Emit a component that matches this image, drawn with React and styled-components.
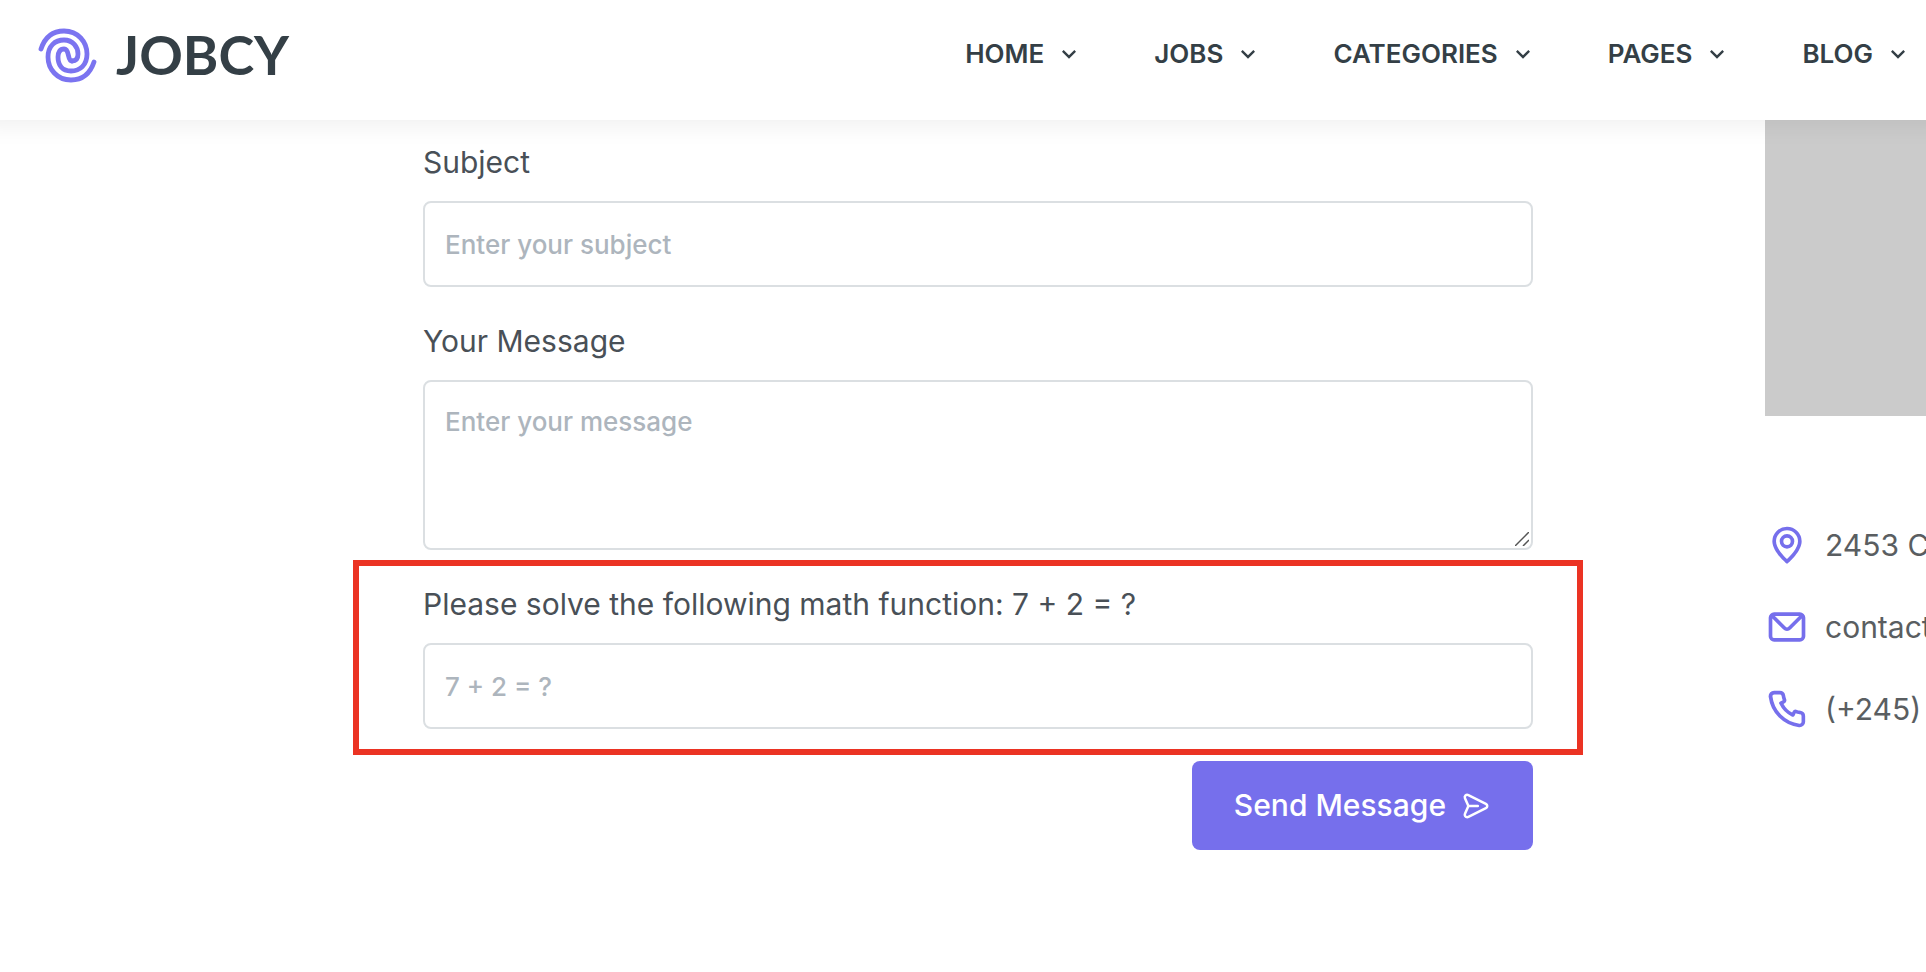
import React from 'react';
import styled, { createGlobalStyle } from 'styled-components';

const GlobalStyle = createGlobalStyle`
  *, *::before, *::after { box-sizing: border-box; }
  body {
    margin: 0;
    background: #fff;
    color: #495057;
    font-family: Inter, "Liberation Sans", sans-serif;
    font-size: 30px;
    line-height: 45px;
    overflow-x: hidden;
  }
`;

const Header = styled.header`
  position: relative;
  z-index: 1;
  display: flex;
  align-items: flex-start;
  justify-content: space-between;
  height: 120px;
  padding: 25px 14px 0 36px;
  background: #fff;
  box-shadow: 0 -20px 24px 24px rgba(0, 0, 0, 0.07);
`;

const Brand = styled.a`
  display: flex;
  align-items: center;
  gap: 18px;
  height: 60px;
  color: #343f46;
  font: 700 54px/60px Lato, sans-serif;
  text-decoration: none;
`;

const NavList = styled.ul`
  display: flex;
  gap: 71px;
  margin: 0;
  padding: 0;
  list-style: none;
`;

const NavLink = styled.a`
  display: flex;
  align-items: center;
  gap: 11px;
  color: #343f46;
  font-size: 26px;
  font-weight: 600;
  line-height: 58px;
  text-decoration: none;
`;

const Main = styled.main`
  display: grid;
  grid-template-columns: 423fr 1110fr 232fr 161fr;
`;

const Form = styled.form`
  grid-column: 2;
  min-width: 0;
  display: flex;
  flex-direction: column;
  gap: 32px;
  padding: 20px 0 40px;
`;

const Field = styled.div`
  position: relative;
  display: flex;
  flex-direction: column;
  gap: 16px;
`;

const HighlightedField = styled(Field)`
  &::after {
    content: "";
    position: absolute;
    inset: -22px -50px -26px -70px;
    border: 6px solid #eb3323;
    pointer-events: none;
  }
`;

const control = `
  display: block;
  width: 100%;
  border: 2px solid #dbdfe2;
  border-radius: 8px;
  background: #fff;
  color: #495057;
  font: 500 26px/40px Inter, "Liberation Sans", sans-serif;
  outline: none;
  &::placeholder { color: #adb5bd; opacity: 1; }
`;

const TextInput = styled.input`
  ${control}
  height: 86px;
  padding: 0 20px;
`;

const TextArea = styled.textarea`
  ${control}
  height: 170px;
  padding: 20px;
  resize: none;
`;

const Grip = styled.svg`
  position: absolute;
  right: 4px;
  bottom: 4px;
  pointer-events: none;
`;

const SubmitButton = styled.button`
  display: flex;
  align-items: center;
  align-self: flex-end;
  gap: 15px;
  padding: 22px 42px;
  border: 0;
  border-radius: 8px;
  background: #766fec;
  color: #fff;
  font: 500 30px/45px Inter, "Liberation Sans", sans-serif;
`;

const Aside = styled.aside`
  grid-column: 4;
  min-width: 0;
  overflow: hidden;
`;

const Picture = styled.div`
  height: 296px;
  background: #cbcbcb;
`;

const ContactList = styled.ul`
  display: flex;
  flex-direction: column;
  gap: 32px;
  margin: 104px 0 0;
  padding: 0;
  list-style: none;
`;

const ContactItem = styled.li`
  display: flex;
  align-items: center;
  gap: 16px;
  height: 50px;
  color: #5a5e61;
  white-space: nowrap;
  svg { flex: none; color: #766fec; }
`;

const paths = {
  chevron: 'M7.41,8.58L12,13.17L16.59,8.58L18,10L12,16L6,10L7.41,8.58Z',
  pin: 'M12,2a8,8,0,0,0-8,7.92c0,5.48,7.05,11.58,7.35,11.84a1,1,0,0,0,1.3,0C13,21.5,20,15.4,20,9.92A8,8,0,0,0,12,2Zm0,17.65c-1.67-1.59-6-6-6-9.73a6,6,0,0,1,12,0C18,13.7,13.67,18.06,12,19.65ZM12,6a4,4,0,1,0,4,4A4,4,0,0,0,12,6Zm0,6a2,2,0,1,1,2-2A2,2,0,0,1,12,12Z',
  mail: 'M19,4H5A3,3,0,0,0,2,7V17a3,3,0,0,0,3,3H19a3,3,0,0,0,3-3V7A3,3,0,0,0,19,4Zm-.41,2-5.88,5.88a1,1,0,0,1-1.42,0L5.41,6ZM20,17a1,1,0,0,1-1,1H5a1,1,0,0,1-1-1V7.41l5.88,5.88a3,3,0,0,0,4.24,0L20,7.41Z',
  phone: 'M19.44,13c-.22,0-.45-.07-.67-.12a9.44,9.44,0,0,1-1.31-.39,2,2,0,0,0-2.48,1l-.22.45a12.18,12.18,0,0,1-2.66-2,12.18,12.18,0,0,1-2-2.66L10.52,9a2,2,0,0,0,1-2.48,10.33,10.33,0,0,1-.39-1.31c-.05-.22-.09-.45-.12-.68a3,3,0,0,0-3-2.49h-3a3,3,0,0,0-3,3.41A19,19,0,0,0,18.53,21.91l.38,0a3,3,0,0,0,2-.76,3,3,0,0,0,1-2.25v-3A3,3,0,0,0,19.44,13Zm.5,6a1,1,0,0,1-.34.75,1.05,1.05,0,0,1-.82.25A17,17,0,0,1,4.07,5.22a1.09,1.09,0,0,1,.25-.82,1,1,0,0,1,.75-.34h3a1,1,0,0,1,1,.79q.06.41.15.81a11.12,11.12,0,0,0,.46,1.55l-1.4.65a1,1,0,0,0-.49,1.33,14.49,14.49,0,0,0,7,7,1,1,0,0,0,.76,0,1,1,0,0,0,.57-.52l.62-1.4a13.69,13.69,0,0,0,1.58.46q.4.09.81.15a1,1,0,0,1,.79,1Z',
  send: 'M20.34,9.32l-14-7a3,3,0,0,0-4.08,3.9l2.4,5.37h0a1.06,1.06,0,0,1,0,.82l-2.4,5.37A3,3,0,0,0,5,22a3.14,3.14,0,0,0,1.35-.32l14-7a3,3,0,0,0,0-5.36Zm-.89,3.57-14,7a1,1,0,0,1-1.35-1.3l2.39-5.37A2,2,0,0,0,6.57,13h6.89a1,1,0,0,0,0-2H6.57a2,2,0,0,0-.08-.22L4.1,5.41a1,1,0,0,1,1.35-1.3l14,7a1,1,0,0,1,0,1.78Z',
};

function Icon({ name, size }) {
  return (
    <svg width={size} height={size} viewBox="0 0 24 24" fill="currentColor" aria-hidden="true">
      <path d={paths[name]} />
    </svg>
  );
}

function LogoMark() {
  return (
    <svg width="62" height="60" viewBox="0 0 62 60" fill="none" stroke="#7b74f0" strokeWidth="4.8" strokeLinecap="round" aria-hidden="true">
      <path d="M5 24C9 12 17 6 28 6C42 6 51 17 51 29C51 40 44 46 35 46C26 46 22 40 22 32C22 27 24 24 28 24C34 24 31 36 36 36" />
      <path d="M58 37C54 49 46 55 35 55C21 55 12 44 12 32C12 21 19 15 28 15C37 15 42 22 42 29C42 34 40 36 36 36" />
    </svg>
  );
}

const navItems = ['HOME', 'JOBS', 'CATEGORIES', 'PAGES', 'BLOG'];

const contacts = [
  { icon: 'pin', text: '2453 C' },
  { icon: 'mail', text: 'contact' },
  { icon: 'phone', text: '(+245)' },
];

export default function App() {
  return (
    <>
      <GlobalStyle />
      <Header>
        <Brand href="#home">
          <LogoMark />
          <span>JOBCY</span>
        </Brand>
        <nav>
          <NavList>
            {navItems.map((item) => (
              <li key={item}>
                <NavLink href="#menu">
                  {item}
                  <Icon name="chevron" size={28} />
                </NavLink>
              </li>
            ))}
          </NavList>
        </nav>
      </Header>
      <Main>
        <Form onSubmit={(event) => event.preventDefault()}>
          <Field>
            <label htmlFor="subject">Subject</label>
            <TextInput id="subject" type="text" placeholder="Enter your subject" />
          </Field>
          <Field>
            <label htmlFor="message">Your Message</label>
            <TextArea id="message" placeholder="Enter your message" />
            <Grip width="14" height="14" viewBox="0 0 14 14" stroke="#555" strokeWidth="1.5" aria-hidden="true">
              <path d="M0 14L14 0M8 14L14 8" />
            </Grip>
          </Field>
          <HighlightedField>
            <label htmlFor="captcha">Please solve the following math function: 7 + 2 = ?</label>
            <TextInput id="captcha" type="text" placeholder="7 + 2 = ?" />
          </HighlightedField>
          <SubmitButton type="submit">
            Send Message
            <Icon name="send" size={30} />
          </SubmitButton>
        </Form>
        <Aside>
          <Picture />
          <ContactList>
            {contacts.map((contact) => (
              <ContactItem key={contact.icon}>
                <Icon name={contact.icon} size={44} />
                <span>{contact.text}</span>
              </ContactItem>
            ))}
          </ContactList>
        </Aside>
      </Main>
    </>
  );
}
